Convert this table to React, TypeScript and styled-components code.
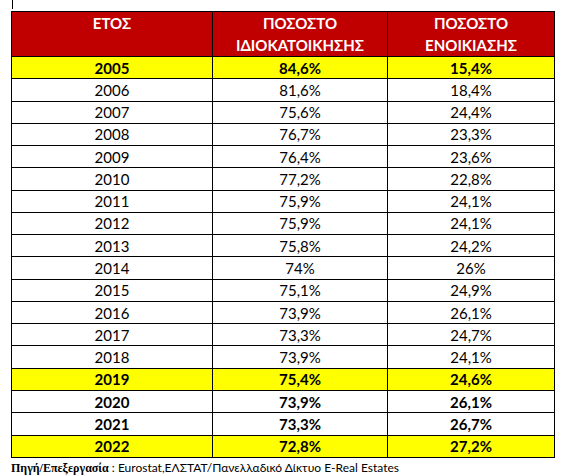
import styled, { createGlobalStyle } from "styled-components";

type Row = {
  year: string;
  own: string;
  rent: string;
  bold?: boolean;
  mark?: boolean;
};

const ROWS: Row[] = [
  { year: "2005", own: "84,6%", rent: "15,4%", bold: true, mark: true },
  { year: "2006", own: "81,6%", rent: "18,4%" },
  { year: "2007", own: "75,6%", rent: "24,4%" },
  { year: "2008", own: "76,7%", rent: "23,3%" },
  { year: "2009", own: "76,4%", rent: "23,6%" },
  { year: "2010", own: "77,2%", rent: "22,8%" },
  { year: "2011", own: "75,9%", rent: "24,1%" },
  { year: "2012", own: "75,9%", rent: "24,1%" },
  { year: "2013", own: "75,8%", rent: "24,2%" },
  { year: "2014", own: "74%", rent: "26%" },
  { year: "2015", own: "75,1%", rent: "24,9%" },
  { year: "2016", own: "73,9%", rent: "26,1%" },
  { year: "2017", own: "73,3%", rent: "24,7%" },
  { year: "2018", own: "73,9%", rent: "24,1%" },
  { year: "2019", own: "75,4%", rent: "24,6%", bold: true, mark: true },
  { year: "2020", own: "73,9%", rent: "26,1%", bold: true },
  { year: "2021", own: "73,3%", rent: "26,7%", bold: true },
  { year: "2022", own: "72,8%", rent: "27,2%", bold: true, mark: true },
];

function App() {
  return (
    <>
      <GlobalStyle />
      <Page>
        <Cursor />
        <Table>
          <colgroup>
            <col style={{ width: 201 }} />
            <col style={{ width: 175 }} />
            <col style={{ width: 167 }} />
          </colgroup>
          <thead>
            <tr>
              <HeadCell>ΕΤΟΣ</HeadCell>
              <HeadCell>
                ΠΟΣΟΣΤΟ
                <br />
                ΙΔΙΟΚΑΤΟΙΚΗΣΗΣ
              </HeadCell>
              <HeadCell>
                ΠΟΣΟΣΤΟ
                <br />
                ΕΝΟΙΚΙΑΣΗΣ
              </HeadCell>
            </tr>
          </thead>
          <tbody>
            {ROWS.map((r) => (
              <BodyRow key={r.year} $mark={r.mark} $bold={r.bold}>
                <Cell>{r.year}</Cell>
                <Cell>{r.own}</Cell>
                <Cell>{r.rent}</Cell>
              </BodyRow>
            ))}
          </tbody>
        </Table>
        <Source>
          <SourceLabel>Πηγή/Επεξεργασία</SourceLabel> : Eurostat,ΕΛΣΤΑΤ/Πανελλαδικό Δίκτυο E-Real Estates
        </Source>
      </Page>
    </>
  );
}

export default App;

const GlobalStyle = createGlobalStyle`
  html, body {
    margin: 0;
    background: #fff;
  }
`;

const Page = styled.div`
  padding: 0 0 0 11px;
  font-family: Lato, "Noto Sans", sans-serif;
  color: #000;
`;

const Cursor = styled.div`
  width: 1px;
  height: 9px;
  margin-left: 1px;
  margin-bottom: 2px;
  background: #000;
`;

const Table = styled.table`
  border-collapse: collapse;
  table-layout: fixed;
  width: 544px;
  font-size: 15px;
`;

const HeadCell = styled.th`
  background: #c00000;
  color: #fff;
  font-weight: 700;
  text-align: center;
  vertical-align: top;
  height: 43px;
  padding: 0;
  line-height: 22px;
  border: 1px solid #000;
`;

const BodyRow = styled.tr<{ $mark?: boolean; $bold?: boolean }>`
  height: 22.28px;
  background: ${(p) => (p.$mark ? "#ffff00" : "#fff")};
  font-weight: ${(p) => (p.$bold ? 700 : 400)};
`;

const Cell = styled.td`
  text-align: center;
  padding: 0;
  line-height: 20px;
  border: 1px solid #000;
`;

const Source = styled.div`
  margin-top: 2px;
  font-size: 12px;
  line-height: 16px;
`;

const SourceLabel = styled.span`
  font-family: "Liberation Serif", serif;
  font-weight: 700;
  font-size: 12px;
`;
